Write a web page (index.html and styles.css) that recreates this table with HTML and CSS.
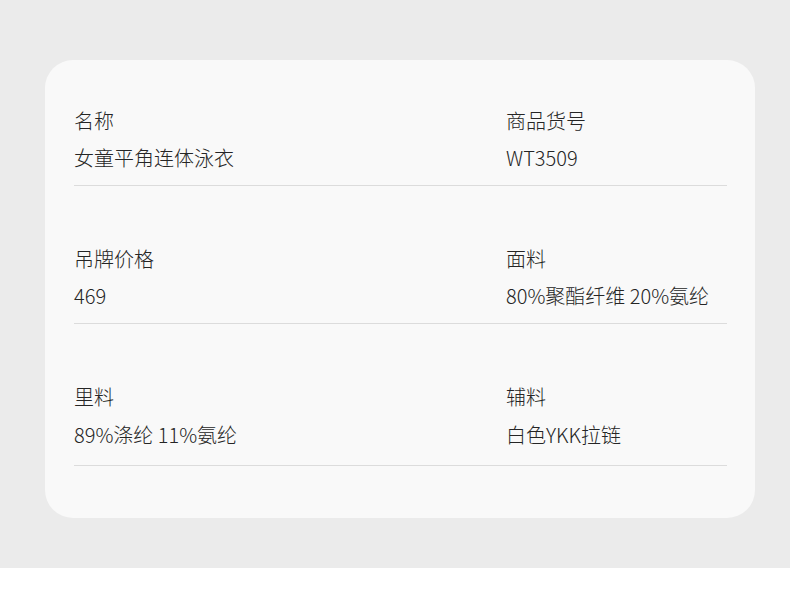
FILE: index.html
```html
<!DOCTYPE html>
<html lang="zh">
<head>
<meta charset="utf-8">
<link rel="stylesheet" href="styles.css">
</head>
<body>
<div class="band">
  <div class="card">
    <div class="row">
      <div class="cell"><div class="label">名称</div><div class="value">女童平角连体泳衣</div></div>
      <div class="cell"><div class="label">商品货号</div><div class="value">WT3509</div></div>
    </div>
    <div class="row">
      <div class="cell"><div class="label">吊牌价格</div><div class="value">469</div></div>
      <div class="cell"><div class="label">面料</div><div class="value">80%聚酯纤维 20%氨纶</div></div>
    </div>
    <div class="row row-last">
      <div class="cell"><div class="label">里料</div><div class="value">89%涤纶 11%氨纶</div></div>
      <div class="cell"><div class="label">辅料</div><div class="value">白色YKK拉链</div></div>
    </div>
  </div>
</div>
</body>
</html>
```
FILE: styles.css
```css
html, body {
  margin: 0;
  padding: 0;
  background: #ffffff;
}
body {
  font-family: "Noto Sans CJK SC", "Noto Sans", sans-serif;
  color: #252525;
}
.band {
  background: #ebebeb;
  height: 568px;
  padding: 60px 35px 0 45px;
  box-sizing: border-box;
}
.card {
  background: #f9f9f9;
  border-radius: 28px;
  height: 458px;
  box-sizing: border-box;
  padding: 47px 28px 0 29px;
}
.row {
  display: grid;
  grid-template-columns: 432px 1fr;
  border-bottom: 1px solid #dcdcdc;
  padding-bottom: 13px;
}
.row + .row {
  padding-top: 59px;
}
.row-last {
  padding-bottom: 16px;
}
.row-last .label {
  margin-bottom: 10px;
}
.label, .value {
  font-size: 20px;
  line-height: 28px;
  font-weight: 300;
}
.label {
  margin-bottom: 9px;
}
```
